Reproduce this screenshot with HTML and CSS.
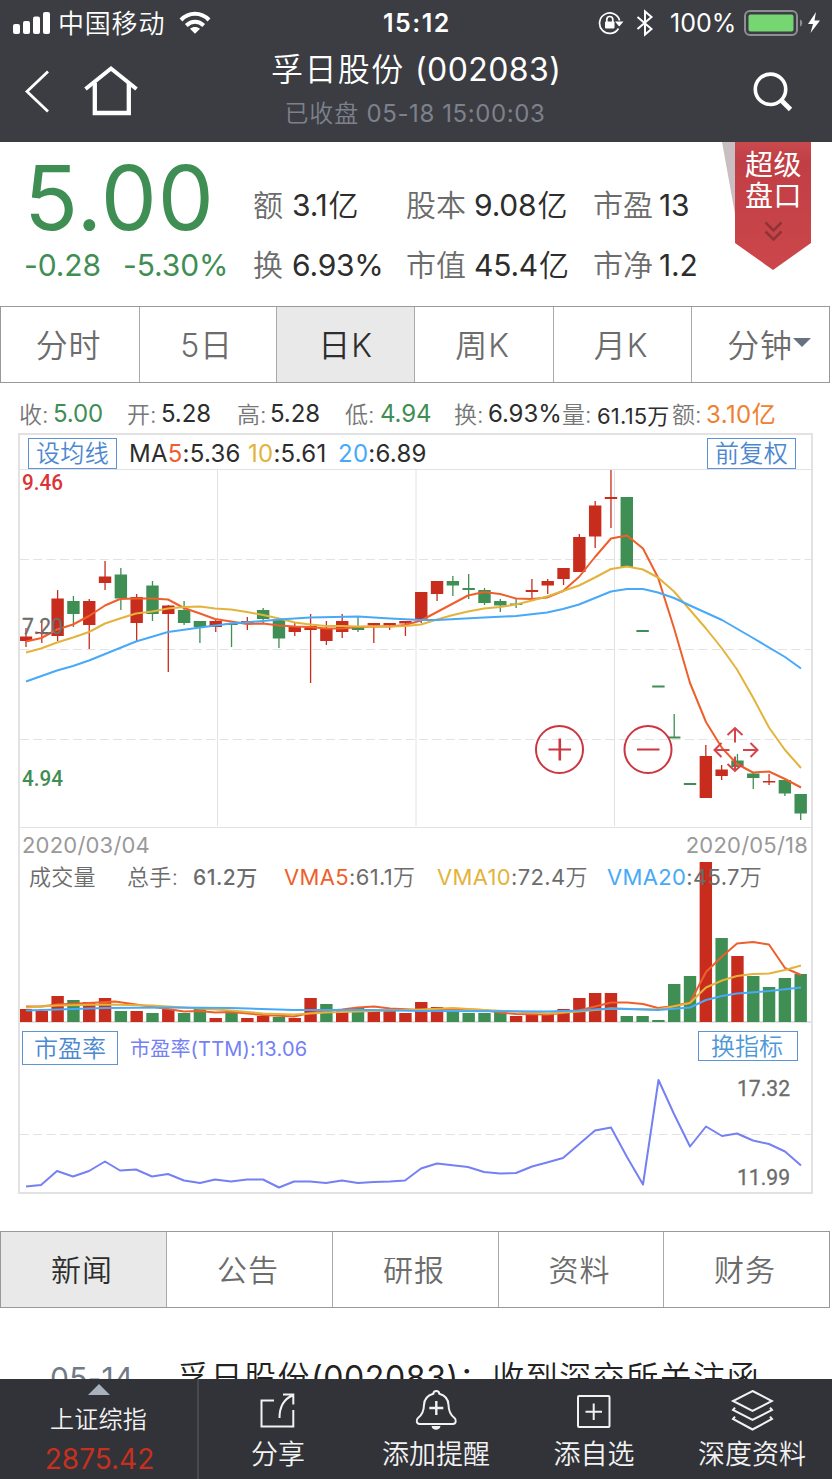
FILE: index.html
```html
<!DOCTYPE html>
<html lang="zh-CN">
<head>
<meta charset="utf-8">
<title>孚日股份 (002083)</title>
<link rel="stylesheet" href="styles.css">
</head>
<body>
<div class="screen">
  <header class="header">
    <div class="status">
      <svg class="signal" width="38" height="24" viewBox="0 0 38 24" fill="#fff"><rect x="1" y="13" width="7" height="10" rx="2"/><rect x="11" y="10" width="7" height="13" rx="2"/><rect x="21" y="5.5" width="7" height="17.500" rx="2"/><rect x="31" y="1" width="7" height="22" rx="2"/></svg>
      <span class="carrier">中国移动</span>
      <svg class="wifi" width="32" height="24" viewBox="0 0 32 24" fill="none" stroke="#fff" stroke-width="4"><path d="M2 9C10 .8 22 .8 30 9"/><path d="M7.300 14.500C12.500 9.500 19.500 9.500 24.700 14.500"/><path d="M16 22.800l-5-5c3-2.500 7-2.500 10 0z" fill="#fff" stroke="none"/></svg>
      <span class="clock">15:12</span>
      <svg class="lock" width="26" height="24" viewBox="0 0 26 24" fill="none" stroke="#fff" stroke-width="1.700"><path d="M20.500 17.500A10.200 10.200 0 1 1 21.600 9.500"/><path d="M17 10.500h8.500l-4.300 5z" fill="#fff" stroke="none"/><rect x="7" y="10.500" width="9.500" height="7" rx="1" fill="#fff" stroke="none"/><path d="M8.800 11V8.500a3 3 0 0 1 6 0V11"/></svg>
      <svg class="bt" width="18" height="28" viewBox="0 0 18 28" fill="none" stroke="#fff" stroke-width="2"><path d="M1.500 8l14 12L9 25.500v-23L15.500 8l-14 12"/></svg>
      <span class="percent">100%</span>
      <svg class="battery" width="60" height="26" viewBox="0 0 60 26"><rect x="1" y="1" width="52" height="24" rx="5" fill="none" stroke="#8d8f92" stroke-width="2"/><rect x="4.500" y="4.500" width="45" height="17" rx="2" fill="#76d672"/><path d="M56 9.500c3 1 3 6 0 7z" fill="#8d8f92"/></svg>
      <svg class="bolt" width="14" height="22" viewBox="0 0 14 22" fill="#fff"><path d="M9 0L1 12h5L3.500 21 13 8.500H7.500z"/></svg>
    </div>
    <div class="nav">
      <svg class="back" width="26" height="44" viewBox="0 0 26 44" fill="none" stroke="#fff" stroke-width="2.800"><path d="M24 2.500L3 22.500l21 20"/></svg>
      <svg class="home" width="54" height="52" viewBox="0 0 54 52" fill="none" stroke="#fff" stroke-width="4"><path d="M1.500 24L27 3.500 52.500 24"/><path d="M10.800 18v30h34V18" stroke-width="4.300"/></svg>
      <div class="titles"><h1>孚日股份 <span>(002083)</span></h1><p>已收盘 <span>05-18 15:00:03</span></p></div>
      <svg class="search" width="42" height="42" viewBox="0 0 42 42" fill="none" stroke="#fff"><circle cx="18.500" cy="18.300" r="15.200" stroke-width="3.600"/><path d="M28.500 28.500l10 10" stroke-width="4.800"/></svg>
    </div>
  </header>

  <section class="quote">
    <div class="price">
      <strong>5.00</strong>
      <div class="change"><span>-0.28</span><span>-5.30%</span></div>
    </div>
    <dl class="stats">
      <dt>额</dt><dd>3.1<em>亿</em></dd><dt>股本</dt><dd>9.08<em>亿</em></dd><dt>市盈</dt><dd>13</dd>
      <dt>换</dt><dd>6.93%</dd><dt>市值</dt><dd>45.4<em>亿</em></dd><dt>市净</dt><dd>1.2</dd>
    </dl>
    <div class="ribbon">
      <svg class="ribbon-shape" width="90" height="128" viewBox="0 0 90 128"><defs><linearGradient id="rg" x2="0" y2="1"><stop offset="0" stop-color="#c94a4f"/><stop offset=".15" stop-color="#c03e45"/><stop offset="1" stop-color="#cb474b"/></linearGradient></defs><path d="M0 0h13v72z" fill="#c9bfc2"/><path d="M13 0h76v101l-38 27-38-27z" fill="url(#rg)"/><path d="M43.500 80.500l8 8 8-8M43.500 89.500l8 8 8-8" fill="none" stroke="#8f3438" stroke-width="2.500"/></svg>
      <div class="ribbon-text">超级<br>盘口</div>
    </div>
  </section>

  <nav class="tabs periods">
    <span>分时</span><span>5日</span><span class="on">日K</span><span>周K</span><span>月K</span><span class="more">分钟<i></i></span>
  </nav>

  <div class="ohlc">
    <span>收:</span><b class="green">5.00</b><span>开:</span><b>5.28</b><span>高:</span><b>5.28</b><span>低:</span><b class="green">4.94</b><span>换:</span><b>6.93%</b><span>量:</span><b class="vol">61.15万</b><span>额:</span><b class="orange">3.10亿</b>
  </div>

  <section class="chart">
    <div class="ma">
      <span class="btn">设均线</span>
      <span class="ma5">MA<em class="c5">5</em>:5.36</span><span class="ma10"><em class="c10">10</em>:5.61</span><span class="ma20"><em class="c20">20</em>:6.89</span>
      <span class="btn right">前复权</span>
    </div>
    <svg class="kline" width="791" height="359" viewBox="20 469 791 359">
      <g class="grid"><path d="M20 469.500H812M20 827.500H812M217.500 469V826M416 469V826M614.500 469V826"/><path class="dash" d="M20 559.500H812M20 649.500H812M20 739.500H812"/></g>
      <g id="candles"></g>
      <g id="averages"></g>
      <g class="scale"><text x="22" y="490" textLength="41" lengthAdjust="spacingAndGlyphs" class="high">9.46</text><text x="22" y="634" textLength="41" lengthAdjust="spacingAndGlyphs">7.20</text><text x="22" y="786" textLength="41" lengthAdjust="spacingAndGlyphs" class="low">4.94</text></g>
      <g fill="none" stroke="#cc3640" stroke-width="2"><circle cx="559.500" cy="749.500" r="23.500"/><circle cx="648" cy="749.500" r="23.500"/><path d="M548.500 749.500h22.500M637 749.500h22.500"/><path d="M559.800 738.500v22" stroke-width="2.600"/>
      <path stroke="#d4444a" d="M735 742.500V728M727.500 735l7.500-7 7.500 7M735 756.500V771M727.500 764l7.500 7 7.500-7M729.500 750H714.500M721.500 743l-7 7 7 7M743 750h14.500M750.500 743l7 7-7 7"/></g>
    </svg>
    <div class="volume">
      <svg class="volume-plot" width="791" height="196" viewBox="20 828 791 196">
        <path d="M20 1022H812" stroke="#e2e2e2" stroke-width="2"/>
        <g id="bars"></g><g id="volume-averages"></g>
      </svg>
      <div class="volume-text">
        <div class="dates"><span>2020/03/04</span><span>2020/05/18</span></div>
        <div class="vma"><span class="w0">成交量</span><span class="w1">总手:</span><span class="w2">61.2万</span><span class="w3"><em class="c5">VMA5</em>:61.1<em class="unit">万</em></span><span class="w4"><em class="c10">VMA10</em>:72.4<em class="unit">万</em></span><span class="w5"><em class="c20">VMA20</em>:45.7<em class="unit">万</em></span></div>
      </div>
    </div>
    <div class="pe-head"><span class="btn">市盈率</span><span class="pe-name">市盈率(TTM):13.06</span><span class="btn right">换指标</span></div>
    <svg class="pe-plot" width="791" height="122" viewBox="20 1070 791 122">
      <g class="grid"><path class="dash" d="M20 1134.500H812"/></g>
      <g id="pe"></g>
      <g class="scale pe-scale"><text x="737" y="1096" textLength="53" lengthAdjust="spacingAndGlyphs">17.32</text><text x="737" y="1185" textLength="53" lengthAdjust="spacingAndGlyphs">11.99</text></g>
    </svg>
  </section>

  <nav class="tabs topics"><span class="on">新闻</span><span>公告</span><span>研报</span><span>资料</span><span>财务</span></nav>

  <div class="news"><time>05-14</time><span>孚日股份<em>(002083)</em>：收到深交所关注函</span></div>

  <footer class="toolbar">
    <div class="index"><i></i><span>上证综指</span><b>2875.42</b></div>
    <div class="tool"><svg width="44" height="44" viewBox="0 0 44 44" fill="none" stroke="#f2f2f2" stroke-width="2"><path d="M18 11.500H5.500v26h31.800V21M37.300 15.500V5.500H27M23.500 29C23.500 18.500 27 10.500 36.500 6.500"/></svg><span>分享</span></div>
    <div class="tool"><svg width="44" height="44" viewBox="0 0 44 44" fill="none" stroke="#f2f2f2" stroke-width="2"><path d="M19.300 4.800c.3-3.700 5.700-3.700 6 0 5.500 1.500 9 5.500 9.200 11.200.2 7.500 2.500 10.500 6 13 2.500 2.200 1.200 6-1.500 6h-33.500c-2.700 0-4-3.800-1.500-6 3.500-2.500 5.800-5.500 6-13 .2-5.700 3.800-9.700 9.300-11.200z"/><path d="M22.300 12v14M15.300 19h14" stroke-width="2.400"/><path d="M17.500 37h9c-.5 5-8.500 5-9 0z" fill="#f2f2f2" stroke="none"/></svg><span>添加提醒</span></div>
    <div class="tool"><svg width="44" height="44" viewBox="0 0 44 44" fill="none" stroke="#f2f2f2" stroke-width="2"><rect x="6" y="7" width="31.500" height="31" rx="1"/><path d="M21.700 14.500v16.500M13.500 22.700h16.500"/></svg><span>添自选</span></div>
    <div class="tool"><svg width="44" height="44" viewBox="0 0 44 44" fill="none" stroke="#f2f2f2" stroke-width="2"><path d="M22.500 2l19.500 10-19.500 10L3 12zM5 18.700L3 21l19.500 10L42 21l-2-2.300M5 27.700L3 30l19.500 10.500L42 30l-2-2.300"/></svg><span>深度资料</span></div>
  </footer>
</div>
<script src="chart.js"></script>
</body>
</html>
```
FILE: styles.css
```css
* { box-sizing: border-box; }
body { margin: 0; background: #fff; font-family: Inter, "Noto Sans CJK SC", sans-serif; font-weight: 350; }
h1, p, dl, dd { margin: 0; font-weight: inherit; }
b, strong { font-weight: inherit; }
em { font-style: normal; }
svg { display: block; flex: none; }
span, dt, dd, time { white-space: nowrap; }
.screen { width: 832px; height: 1479px; overflow: hidden; display: flex; flex-direction: column; }

.header { height: 142px; background: #3b3d42; color: #fff; flex: none; }
.status { height: 46px; display: grid; align-items: center; grid-template-columns: 46px 121px 204px 215px 38px 34px 74px 63px 1fr; font-size: 25px; padding-left: 12px; }
.carrier { font-size: 26px; letter-spacing: .8px; padding-bottom: 3px; }
.clock { font-weight: 600; font-size: 25px; letter-spacing: 1.500px; }
.percent { font-weight: 400; letter-spacing: 0; }
.nav { display: grid; grid-template-columns: 60px 186px 290px 1fr; padding-left: 24px; height: 96px; align-items: start; }
.back { margin-top: 23px; }
.home { margin-top: 19px; }
.search { margin: 25px 0 0 192px; }
.titles { text-align: center; white-space: nowrap; }
.titles h1 { font-size: 32px; line-height: 48px; letter-spacing: 1.400px; padding-left: 1px; }
.titles h1 span { font-weight: 400; letter-spacing: .4px; }
.titles p { font-size: 24px; line-height: 36px; margin-top: 2px; color: #7d818c; letter-spacing: .8px; }
.titles p span { font-weight: 400; letter-spacing: .6px; }

.quote { position: relative; height: 164px; flex: none; display: grid; grid-template-columns: 229px 1fr; padding-left: 24px; }
.price { color: #3f8e53; }
.price strong { display: block; font-size: 89px; line-height: 88px; margin-top: 12px; font-weight: 400; letter-spacing: .8px; }
.change { display: grid; grid-template-columns: 99px 1fr; font-size: 30px; line-height: 44px; margin-top: 1px; font-weight: 400; letter-spacing: -.1px; }
.stats { display: grid; grid-template-columns: 38px 115px 67px 120px 65px 1fr; grid-auto-rows: 60px; font-size: 30px; line-height: 60px; margin-top: 33px; color: #2d2d2d; }
.stats dt { color: #6c6c6c; }
.stats dd { font-weight: 400; letter-spacing: -.2px; padding-left: 1px; }
.stats dd em { font-weight: 350; margin-left: 1px; }
.ribbon { position: absolute; left: 722px; top: 0; }
.ribbon-text { position: absolute; left: 23px; top: 8px; font-size: 28px; line-height: 31px; color: #fff; font-weight: 400; white-space: nowrap; letter-spacing: .5px; }

.tabs { display: grid; width: 830px; flex: none; height: 77px; border: 1px solid #999; color: #6c6c6c; }
.tabs span { display: flex; align-items: center; justify-content: center; padding: 0 3px 4px 0; }
.tabs span + span { border-left: 1px solid #aaa; }
.tabs .on { background: #e9e9e9; color: #2d2d2d; }
.periods { grid-template-columns: 138px 137px 138px 139px 138px 1fr; font-size: 32px; letter-spacing: .8px; }
.periods .on { padding-right: 0; }
.periods .more { padding: 0 0 4px 17px; }
.more i { border: 9px solid transparent; border-top-color: #66727f; border-bottom: 0; }
.topics { margin-top: 37px; grid-template-columns: 165px 166px 166px 165px 1fr; font-size: 30px; letter-spacing: 1px; }

.ohlc { height: 50px; flex: none; padding: 11px 0 0 19px; display: grid; grid-template-columns: 34px 74px 34px 76px 33px 75px 35px 74px 34px 74px 35px 75px 34px 1fr; align-items: center; font-size: 24px; color: #777; }
.ohlc span { font-size: 23px; padding-bottom: 2px; }
.ohlc b { color: #2d2d2d; font-weight: 400; letter-spacing: -.1px; }
.ohlc .vol { font-size: 22px; letter-spacing: .2px; font-weight: 380; }
.ohlc .green { color: #3f8e53; }
.ohlc .orange { color: #f08030; letter-spacing: .4px; padding-bottom: 2px; }

.chart { width: 795px; height: 761px; margin-left: 18px; flex: none; border: 2px solid #e2e2e2; }
.btn { display: flex; align-items: center; justify-content: center; border: 1px solid #5b95d8; color: #4c88d0; height: 31px; font-size: 24px; padding-bottom: 4px; }
.ma { height: 34px; display: grid; grid-template-columns: 89px 118px 90px 382px 89px; padding: 2px 0 0 8px; align-items: center; font-size: 24px; color: #2d2d2d; font-weight: 400; letter-spacing: .25px; }
.ma .btn { letter-spacing: .3px; font-weight: 350; }
.ma5 { margin-left: 12px; }
.ma10 { margin-left: 13px; }
.ma20 { margin-left: 13px; }
.c5 { color: #ef5f2c; }
.c10 { color: #e3b33c; }
.c20 { color: #48a9f8; }
.grid path { fill: none; stroke: #e2e2e2; }
.grid .dash { stroke-dasharray: 9 4.300; }
.scale text { font: 400 22px Roboto, sans-serif; fill: #6c6c6c; stroke: #6c6c6c; stroke-width: .3px; }
.scale .high { fill: #dc3339; font-weight: 500; stroke: none; }
.scale .low { fill: #3f8e53; font-weight: 500; stroke: none; }
.volume { display: grid; height: 196px; }
.volume-plot, .volume-text { grid-area: 1 / 1; }
.volume-text { color: #6c6c6c; font-size: 22px; }
.dates { display: flex; justify-content: space-between; padding: 0 3px 0 2px; height: 34px; line-height: 34px; color: #999; font-weight: 400; letter-spacing: .2px; }
.vma { display: grid; grid-template-columns: 98px 66px 91px 153px 170px 1fr; padding-left: 9px; line-height: 31px; font-weight: 400; letter-spacing: .35px; }
.vma .w0, .vma .w1, .vma .unit { font-weight: 350; }
.vma .w0 { letter-spacing: .2px; }
.vma .w2 { font-weight: 450; font-size: 21px; letter-spacing: .5px; line-height: 32px; }
.pe-head { height: 46px; display: grid; grid-template-columns: 96px 580px 100px; padding: 7px 0 0 2px; align-items: start; }
.pe-head .btn { height: 34px; }
.pe-head .btn.right { height: 30px; color: #4f98d8; padding-right: 2px; }
.pe-name { margin-left: 12px; font-size: 20px; line-height: 36px; color: #7480f4; font-weight: 400; letter-spacing: .2px; }

.news { height: 71px; flex: none; display: grid; grid-template-columns: 127px 1fr; padding: 46px 0 0 50px; line-height: 48px; overflow: hidden; color: #222; font-size: 32px; letter-spacing: 1.500px; }
.news em { font-weight: 400; letter-spacing: .6px; }
.news time { font-size: 30px; font-weight: 400; color: #6f7b87; letter-spacing: .2px; }

.toolbar { height: 100px; flex: none; background: #313338; color: #f2f2f2; display: grid; grid-template-columns: 199px repeat(4, 158px); }
.index { border-right: 2px solid #46494e; display: flex; flex-direction: column; align-items: center; }
.index i { border: 11px solid transparent; border-bottom-color: #a9b0be; border-top: 0; margin-top: 5px; }
.index span { font-size: 24px; line-height: 36px; margin-top: 7px; letter-spacing: .3px; }
.index b { font-size: 28px; line-height: 38px; margin-top: 2px; color: #c7301f; font-weight: 400; letter-spacing: 0; padding-left: 2px; }
.tool { display: flex; flex-direction: column; align-items: center; padding-top: 10px; font-size: 27px; }
.tool span { line-height: 43px; }
```
FILE: chart.js
```js
const SVG_NS = "http://www.w3.org/2000/svg";
const RED = "#c72c1d", GREEN = "#3f8e53";
const xAt = i => 26 + i * 15.81;

function add(parent, tag, attrs) {
  const node = document.createElementNS(SVG_NS, tag);
  for (const key in attrs) node.setAttribute(key, attrs[key]);
  document.getElementById(parent).appendChild(node);
}

// [direction, body top, body bottom, wick top, wick bottom]
const candles = [
  ["r",636.5,641,628,647],["r",632,633.5,622,643],["r",598.5,636,590,641],["g",601,614,596,627],["r",601,625,599,649],
  ["r",576.5,583,561,590],["g",574.5,598.5,568,610],["r",597,623,594,641],["g",585.5,614,581,621],["r",605.5,614,605,672],
  ["g",610,623,601,625],["g",621,627,621,643],["r",621,627,619,632],["g",623,625,623,647],["r",621,623,617,630],
  ["g",610,619,608,623],["g",619.5,638.5,619,648],["r",627,632,623,636],["r",626,630,614,683],["r",628,641,621,645],
  ["r",621,632,614,638],["g",627,630,617,632],["r",623,625.5,623,643],["r",623,625.5,623,630],["r",621,623.5,621,636],
  ["r",592,619.5,592,623],["r",581,594,581,601],["g",581,585.5,576,596],["g",588,590,574,599],["g",590,603,588,605],
  ["g",601,605.5,599,612],["g",603.5,605,599,608],["r",590,592,579,599],["r",581,585.5,579,594],["r",568,579,568,585],
  ["r",537,572,534,572],["r",505.5,536.5,501,548],["r",497,499,470,528],["g",497,567,497,567],["g",630,632,630,632],
  ["g",685.5,687.5,686,687],["g",736.5,738.5,714,738],["g",783,785,783,785],["r",756,798,745,798],["r",769.5,776,765,780],
  ["g",760.5,767,754,767],["g",773.5,778,773,789],["r",781,782.5,774,785],["g",780,793.5,780,796],["g",794,813.5,794,820]
];
candles.forEach(([dir, top, bottom, high, low], i) => {
  const fill = dir === "r" ? RED : GREEN, x = xAt(i);
  add("candles", "rect", { x: x - 0.65, y: high, width: 1.3, height: low - high, fill });
  add("candles", "rect", { x: x - 6.2, y: top, width: 12.4, height: bottom - top, fill });
});

const volumes = "r1009 r1011 r996 g1000 r1002 r998 g1011 r1011 g1013 r1009 g1013 g1009 r1018 g1010 r1018 r1016 g1017 r1018 r998 g1004 r1010 g1008 r1011 r1011 r1013 r1002 r1007 g1011 g1013 g1013 g1012 r1016 r1014 r1014 r1009 r998 r993 r993 g1016 g1016 g1020 g984 g976 r862 g938 r956 g976 g987 g978 g974";
volumes.split(" ").forEach((item, i) => {
  const top = Number(item.slice(1));
  add("bars", "rect", { x: xAt(i) - 6.2, y: top, width: 12.4, height: 1022 - top, fill: item[0] === "r" ? RED : GREEN });
});

function line(parent, stroke, points) {
  add(parent, "polyline", { points, fill: "none", stroke, "stroke-width": 2, "stroke-linejoin": "round" });
}

line("averages", "#ef5f2c", "26,641.5 41.5,638 57,629.5 73,624.5 89,616 105,605.5 120,599 136,598.5 152,598.5 168,599.5 184,608 200,613.5 215,619 231,621.5 247,624 263,623.5 279,625.5 295,626.5 310,627 326,628.5 342,628.5 358,627 374,626.5 390,626.5 405,625 421,620.5 437,612 453,603.5 468,595.5 484,592 500,594 516,598.5 532,599 547,597.5 563,591 579,577 595,557 611,538.5 627,535.5 643,548.5 658,577.5 674,628 690,683 706,722 722,748 737,764 753,772.5 769,771.5 785,779 801,787.5");
line("averages", "#e3b33c", "26,652.5 41,648.5 57,642.5 73,637.5 89,632 105,623.5 120,618.5 136,613.5 152,611.5 168,608.5 184,607 200,606.5 215,608.5 231,609.5 247,612 263,615 279,618.5 295,622.5 310,624.5 326,626 342,626 358,626.5 390,626.5 405,626 421,624.5 437,619.5 453,615 468,611.5 484,608.5 500,607 516,604.5 532,600.5 547,596.5 563,591 579,585.5 595,577.5 611,569 627,566.5 643,569.5 658,577.5 674,591.5 690,610 706,628.5 722,648.5 737,669.5 753,697.5 769,727.5 785,750 801,768");
line("averages", "#48a9f8", "26,681.5 57,670.5 73,666 89,660.5 136,641.5 168,632 200,627.5 231,623.5 263,621 279,619.5 310,617.5 358,616.5 390,618.5 421,620 437,620 484,617.5 516,616 547,612.5 563,609 579,604.5 595,598 611,591.5 627,589 643,589 658,592.5 674,598 690,605.5 722,620 753,638 785,657 801,668.5");
line("volume-averages", "#ef5f2c", "26,1006.5 41,1006.5 57,1004.5 89,1003 115,1001.5 136,1004.5 168,1009 184,1011.5 200,1011 215,1012.5 231,1012 263,1015 294,1016.5 310,1013 326,1011 342,1009.5 358,1007.5 374,1006.5 390,1008.5 421,1010 453,1009 484,1010 500,1012.5 516,1014 547,1014.5 563,1013 579,1010.5 595,1006.5 611,1002.5 627,1002.5 643,1004 658,1008 674,1006 690,1002.5 706,972 722,956.5 737,943.5 753,942 769,944.5 785,968 801,975");
line("volume-averages", "#e3b33c", "26,1007.5 57,1005.5 105,1004.5 152,1005.5 200,1008.5 231,1010.5 263,1013.5 294,1014.5 326,1012.5 374,1011 421,1009.5 453,1008 484,1010 516,1011.5 547,1013.5 579,1011.5 611,1008.5 658,1009.5 690,1003 706,987.5 722,980.5 737,976 753,974 769,973.5 785,970 801,965.5");
line("volume-averages", "#48a9f8", "26,1010.5 105,1008 168,1007.5 231,1008 294,1010 374,1010 421,1011 547,1011.5 579,1010.5 611,1008.5 658,1010 690,1007.5 706,1000 722,996 737,993.5 769,991 801,987.5");
line("pe", "#7480f4", "26,1186.5 41,1185 57,1171 73,1176.5 89,1171 105,1161.5 120,1170.5 136,1169.5 152,1176.5 168,1174 184,1180.5 200,1183 215,1179.5 231,1181.5 247,1179.5 263,1179.5 279,1187.5 294,1181.5 310,1181.5 326,1183 342,1180.5 358,1183 374,1182 390,1181.5 405,1180.5 421,1168.5 437,1163.5 468,1167 484,1172 500,1173.5 516,1173 532,1166.5 547,1162.5 563,1158 595,1130.5 611,1127.5 627,1157 643,1184.5 658.5,1080 674,1114 690,1146.5 706,1126.5 722,1136 737,1133.5 753,1140.5 769,1144 785,1151.5 801,1165.5");
```
